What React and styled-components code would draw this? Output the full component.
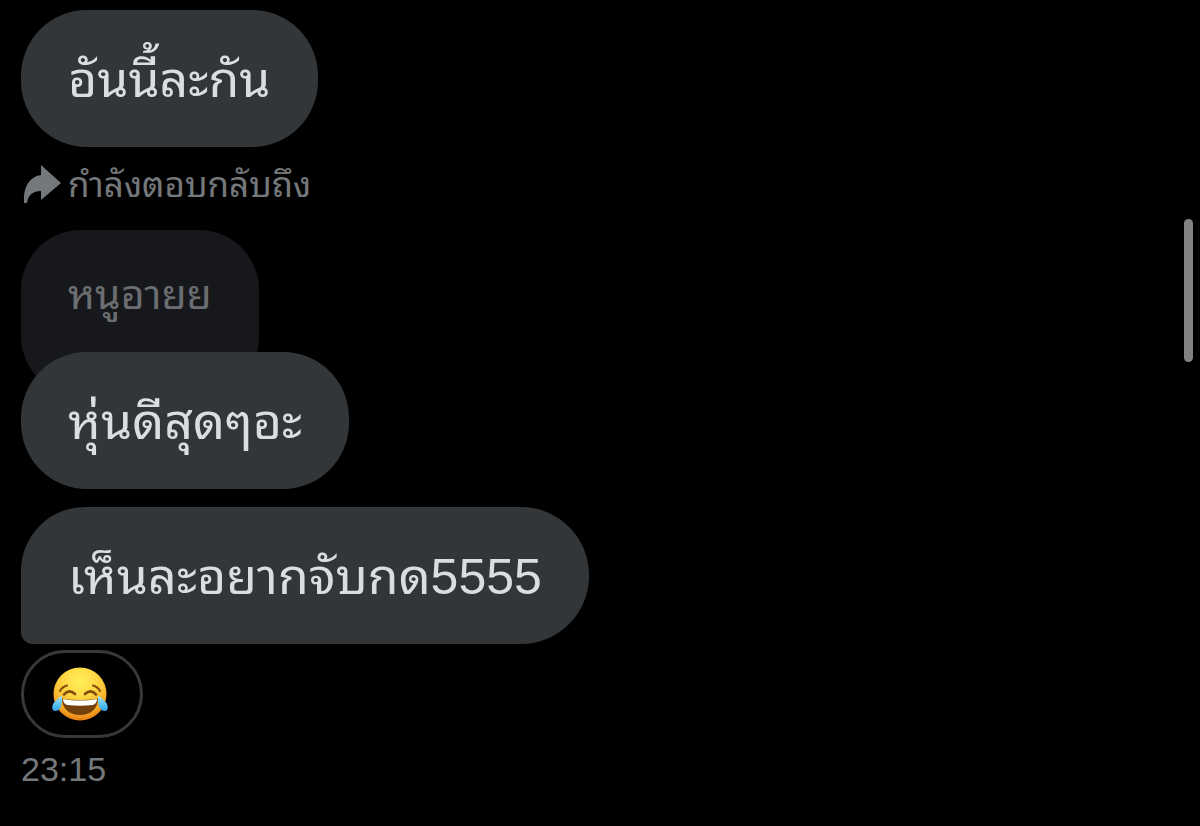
import React from 'react'
import styled, { createGlobalStyle } from 'styled-components';

const GlobalStyle=createGlobalStyle`
    *{
        box-sizing: border-box;
    }
    body{
        margin: 0;
        background-color: #000;
        font-family: "Liberation Sans", "Noto Sans Thai Looped", Loma, Garuda, Waree, Umpush, "Noto Sans Thai", sans-serif;
    }
`;

const Container=styled.main`
    display: flex;
    flex-direction: column;
    align-items: flex-start;
    min-height: 100vh;
    padding: 10px 21px;
    overflow: hidden;
    position: relative;
`;

const Bubble=styled.div`
    background-color: #333639;
    color: #dcdde0;
    font-size: 50px;
    line-height: 60px;
    padding: 40px 47px 37px;
    border-radius: ${props=>props.$last ? '64px 68px 68px 12px' : '66px'};
    margin-top: ${props=>props.$last ? '18px' : '0'};
    position: relative;
`;

const ReplyLabel=styled.div`
    display: flex;
    align-items: center;
    gap: 6px;
    height: 40px;
    margin: 18px 0 25px 1px;
    color: #75787b;
    font-size: 35px;
    line-height: 38px;
`;

const ReplyIcon=styled.svg`
    width: 40px;
    height: 40px;
    fill: #75787b;
`;

const Quote=styled.div`
    background-color: #17181b;
    color: #6b6e71;
    font-size: 41px;
    line-height: 50px;
    padding: 40px 47px 76px;
    border-radius: 60px;
    margin-bottom: -44px;
`;

const Reaction=styled.button`
    display: flex;
    align-items: center;
    justify-content: center;
    background-color: #000;
    border: 3px solid #36383b;
    border-radius: 44px;
    padding: 12px 28px;
    margin-top: 6px;
`;

const Emoji=styled.svg`
    width: 60px;
    height: 58px;
`;

const Time=styled.time`
    color: #75787b;
    font-size: 34px;
    line-height: 40px;
    margin-top: 11px;
`;

const ScrollThumb=styled.div`
    position: absolute;
    top: 219px;
    right: 7px;
    width: 9px;
    height: 143px;
    border-radius: 5px;
    background-color: #828282;
`;

function JoyFace() {
    return (
    <Emoji viewBox="0 0 60 58" aria-hidden="true">
        <defs>
            <radialGradient id="face" cx="0.5" cy="0.25" r="0.78">
                <stop offset="0" stopColor="#fff05a" />
                <stop offset="0.4" stopColor="#ffd843" />
                <stop offset="0.8" stopColor="#f5a623" />
                <stop offset="1" stopColor="#dd7410" />
            </radialGradient>
            <linearGradient id="tear" x1="0" y1="0" x2="0" y2="1">
                <stop offset="0" stopColor="#a9e8fb" />
                <stop offset="1" stopColor="#28a4e8" />
            </linearGradient>
        </defs>
        <circle cx="28" cy="29" r="26.5" fill="url(#face)" />
        <g fill="none" stroke="#824b0b" strokeLinecap="round">
            <path d="M8 26Q10 22 15 20.5" strokeWidth="2" />
            <path d="M48 26Q46 22 41 20.5" strokeWidth="2" />
            <path d="M12 29.5Q17 23.5 23 29" strokeWidth="2.6" />
            <path d="M33 29Q39 23.5 44 29.5" strokeWidth="2.6" />
        </g>
        <path d="M10 33.5Q28 36.5 46 33.5C46 43.5 39 50 28 50S10 43.5 10 33.5Z" fill="#74410d" />
        <path d="M11 34Q28 37 45 34Q45 38.5 41 40Q28 41.5 15 40Q11 38.5 11 34Z" fill="#fff" />
        <path d="M9.5 30.5C11.5 39 8 46 3.5 46C-0.5 46 -0.5 41 2 37.5Q5.5 34 9.5 30.5Z" fill="url(#tear)" />
        <path d="M46.5 30.5C44.5 39 48 46 52.5 46C56.5 46 56.5 41 54 37.5Q50.5 34 46.5 30.5Z" fill="url(#tear)" />
    </Emoji>
  )
}

export default function App() {
    return (
    <>
        <GlobalStyle />
        <Container lang="th">
            <Bubble>อันนี้ละกัน</Bubble>
            <ReplyLabel>
                <ReplyIcon viewBox="0 0 40 40" aria-hidden="true">
                    <path d="M19 0L39 18L19 35V26C11 26 6 30 5 38H2C1 22 7 12 19 10Z" />
                </ReplyIcon>
                <span>กำลังตอบกลับถึง</span>
            </ReplyLabel>
            <Quote>หนูอายย</Quote>
            <Bubble>หุ่นดีสุดๆอะ</Bubble>
            <Bubble $last>เห็นละอยากจับกด5555</Bubble>
            <Reaction type="button" aria-label="😂">
                <JoyFace />
            </Reaction>
            <Time>23:15</Time>
            <ScrollThumb />
        </Container>
    </>
  )
}
